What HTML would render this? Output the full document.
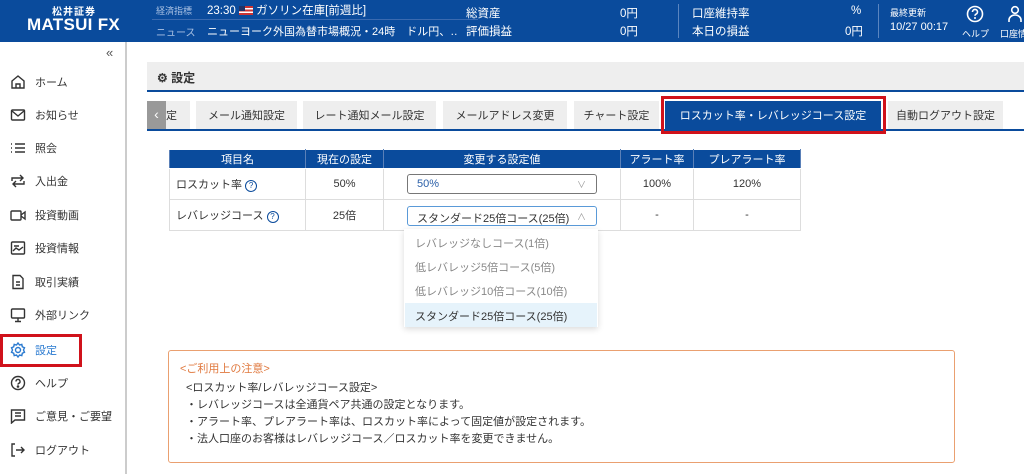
<!DOCTYPE html>
<html><head><meta charset="utf-8"><style>
*{margin:0;padding:0;box-sizing:border-box}
body{width:1024px;height:474px;overflow:hidden;font-family:"Liberation Sans","Noto Sans CJK JP",sans-serif;background:#fff;position:relative;color:#333;font-size:11px}
.a{position:absolute;white-space:nowrap}
#hd{position:absolute;left:0;top:0;width:1024px;height:42px;background:#0a4b9c;color:#fff}
#sb{position:absolute;left:0;top:42px;width:127px;height:432px;border-right:2px solid #ccc;background:#fff}
.it{position:absolute;left:10px;font-size:11px;color:#333;display:flex;align-items:center}
.it svg{width:16px;height:16px;margin-right:9px}
.tab{position:absolute;top:101px;height:28px;background:#eee;font-size:11px;color:#333;display:flex;align-items:center;justify-content:center}
table{position:absolute;left:169px;top:149px;border-collapse:collapse;font-size:11px}
td,th{border:1px solid #ddd;text-align:center}
th{background:#0a4b9c;color:#fff;font-weight:normal;height:19px;border-color:#fff #5a80b8}
td{height:31px}
.sel{position:absolute;left:407px;width:190px;height:20px;border:1px solid #777;border-radius:3px;font-size:11px;padding:3px 9px;color:#333}
.dd div{position:absolute;left:405px;width:192px;height:24px;font-size:11px;color:#888;padding:5px 10px}
</style></head><body>
<div id="hd">
<div class="a" style="left:52px;top:3px;font-size:10px;font-weight:bold;letter-spacing:1px">松井証券</div>
<div class="a" style="left:27px;top:15px;font-size:17px;font-weight:bold;letter-spacing:0.3px">MATSUI FX</div>
<div class="a" style="left:156px;top:4px;font-size:9px;color:#a9c1e3">経済指標</div>
<div class="a" style="left:207px;top:2px;font-size:11.5px">23:30 <span style="display:inline-block;width:14px;height:9px;background:linear-gradient(#c33 0 20%,#fff 20% 40%,#c33 40% 60%,#fff 60% 80%,#c33 80%);position:relative;vertical-align:-1px"><span style="position:absolute;left:0;top:0;width:6px;height:5px;background:#236"></span></span> ガソリン在庫[前週比]</div>
<div class="a" style="left:152px;top:19px;width:326px;height:1px;background:#3a6ab0"></div>
<div class="a" style="left:156px;top:24px;font-size:10px;color:#a9c1e3">ニュース</div>
<div class="a" style="left:207px;top:23px;font-size:11px;width:250px;overflow:hidden">ニューヨーク外国為替市場概況・24時　ドル円、…</div>
<div class="a" style="left:466px;top:5px;font-size:11.5px">総資産</div>
<div class="a" style="left:466px;top:23px;font-size:11.5px">評価損益</div>
<div class="a" style="left:620px;top:5px;font-size:11.5px">0円</div>
<div class="a" style="left:620px;top:23px;font-size:11.5px">0円</div>
<div class="a" style="left:678px;top:4px;width:1px;height:34px;background:#5a85c0"></div>
<div class="a" style="left:692px;top:5px;font-size:11.5px">口座維持率</div>
<div class="a" style="left:692px;top:23px;font-size:11.5px">本日の損益</div>
<div class="a" style="left:851px;top:5px;font-size:11.5px">%</div>
<div class="a" style="left:845px;top:23px;font-size:11.5px">0円</div>
<div class="a" style="left:878px;top:4px;width:1px;height:34px;background:#5a85c0"></div>
<div class="a" style="left:890px;top:6px;font-size:9px">最終更新</div>
<div class="a" style="left:890px;top:21px;font-size:11px">10/27 00:17</div>
<svg class="a" style="left:966px;top:5px" width="18" height="18" viewBox="0 0 18 18"><circle cx="9" cy="9" r="7.5" fill="none" stroke="#fff" stroke-width="1.6"/><path d="M6.5 7a2.5 2.5 0 1 1 3.5 2.2c-.8.4-1 .8-1 1.6" fill="none" stroke="#fff" stroke-width="1.6"/><circle cx="9" cy="13" r="1" fill="#fff"/></svg>
<div class="a" style="left:962px;top:27px;font-size:9px">ヘルプ</div>
<svg class="a" style="left:1006px;top:5px" width="18" height="18" viewBox="0 0 18 18"><circle cx="9" cy="5" r="3.3" fill="none" stroke="#fff" stroke-width="1.6"/><path d="M3 17v-2a6 5 0 0 1 12 0v2" fill="none" stroke="#fff" stroke-width="1.6"/></svg>
<div class="a" style="left:1000px;top:27px;font-size:9px">口座情報</div>
</div>

<div id="sb">
<div class="a" style="left:106px;top:3px;font-size:13px;color:#555">«</div>
</div>
<div class="it" style="top:74px"><svg viewBox="0 0 16 16" fill="none" stroke="#333" stroke-width="1.4"><path d="M2 7l6-5 6 5v7H2z"/><path d="M6 14v-4h4v4"/></svg>ホーム</div>
<div class="it" style="top:107px"><svg viewBox="0 0 16 16" fill="none" stroke="#333" stroke-width="1.4"><rect x="1.5" y="3" width="13" height="10" rx="1"/><path d="M2 4l6 5 6-5"/></svg>お知らせ</div>
<div class="it" style="top:140px"><svg viewBox="0 0 16 16" fill="none" stroke="#333" stroke-width="1.4"><path d="M1 4h1M1 8h1M1 12h1M5 4h10M5 8h10M5 12h10"/></svg>照会</div>
<div class="it" style="top:173px"><svg viewBox="0 0 16 16" fill="none" stroke="#333" stroke-width="1.4"><path d="M2 8V5h11M10 2l3 3-3 3M14 8v3H3M6 14l-3-3 3-3"/></svg>入出金</div>
<div class="it" style="top:207px"><svg viewBox="0 0 16 16" fill="none" stroke="#333" stroke-width="1.4"><rect x="1" y="4" width="10" height="9" rx="1"/><path d="M11 8l4-3v7l-4-3"/></svg>投資動画</div>
<div class="it" style="top:240px"><svg viewBox="0 0 16 16" fill="none" stroke="#333" stroke-width="1.4"><rect x="1.5" y="2" width="13" height="12" rx="1"/><path d="M4 6h5M3 11l3-3 3 2 4-3"/></svg>投資情報</div>
<div class="it" style="top:274px"><svg viewBox="0 0 16 16" fill="none" stroke="#333" stroke-width="1.4"><path d="M3 1.5h7l3 3v10H3z"/><path d="M6 8h4M6 11h4"/></svg>取引実績</div>
<div class="it" style="top:307px"><svg viewBox="0 0 16 16" fill="none" stroke="#333" stroke-width="1.4"><rect x="1.5" y="2" width="13" height="9" rx="1"/><path d="M8 11v3M5 14.5h6"/></svg>外部リンク</div>
<div class="a" style="left:0;top:334px;width:82px;height:33px;border:3px solid #d0121b"></div>
<div class="it" style="top:342px;color:#2a7ad0"><svg viewBox="0 0 16 16" fill="none" stroke="#2a7ad0" stroke-width="1.4"><circle cx="8" cy="8" r="2.5"/><path d="M8 1l1.5 2 2.3-.6.5 2.3 2.2 1-1 2.3 1 2.3-2.2 1-.5 2.3-2.3-.6L8 15l-1.5-2-2.3.6-.5-2.3-2.2-1 1-2.3-1-2.3 2.2-1 .5-2.3 2.3.6z"/></svg>設定</div>
<div class="it" style="top:375px"><svg viewBox="0 0 16 16" fill="none" stroke="#333" stroke-width="1.4"><circle cx="8" cy="8" r="6.5"/><path d="M6 6.5a2 2 0 1 1 2.8 1.8c-.6.3-.8.6-.8 1.3"/><circle cx="8" cy="11.5" r=".6" fill="#333"/></svg>ヘルプ</div>
<div class="it" style="top:408px"><svg viewBox="0 0 16 16" fill="none" stroke="#333" stroke-width="1.4"><path d="M1.5 2h13v10H5l-3.5 3z"/><path d="M5 5h6M5 8h6"/></svg>ご意見・ご要望</div>
<div class="it" style="top:442px"><svg viewBox="0 0 16 16" fill="none" stroke="#333" stroke-width="1.4"><path d="M5 2H2v12h3M6 8h8M11 5l3 3-3 3"/></svg>ログアウト</div>

<div class="a" style="left:147px;top:62px;width:877px;height:30px;background:#eee;border-bottom:2px solid #0a4b9c"></div>
<div class="a" style="left:157px;top:69px;font-size:12px;font-weight:bold;color:#333">⚙ 設定</div>

<div class="a" style="left:147px;top:129px;width:877px;height:2px;background:#0a4b9c"></div>
<div class="tab" style="left:166px;width:24px;justify-content:flex-start">定</div>
<div class="a" style="left:147px;top:101px;width:19px;height:28px;background:#999;color:#fff;font-size:14px;text-align:center;line-height:26px">‹</div>
<div class="tab" style="left:196px;width:101px">メール通知設定</div>
<div class="tab" style="left:303px;width:133px">レート通知メール設定</div>
<div class="tab" style="left:443px;width:124px">メールアドレス変更</div>
<div class="tab" style="left:574px;width:85px">チャート設定</div>
<div class="tab" style="left:665px;width:216px;background:#0a4b9c;color:#fff">ロスカット率・レバレッジコース設定</div>
<div class="a" style="left:661px;top:96px;width:225px;height:38px;border:3px solid #d0121b"></div>
<div class="tab" style="left:888px;width:115px">自動ログアウト設定</div>

<table>
<tr><th style="width:136px">項目名</th><th style="width:78px">現在の設定</th><th style="width:237px">変更する設定値</th><th style="width:73px">アラート率</th><th style="width:107px">プレアラート率</th></tr>
<tr><td style="text-align:left;padding-left:6px">ロスカット率 <span style="color:#0a4b9c;border:1px solid #0a4b9c;border-radius:50%;display:inline-block;width:12px;height:12px;font-size:8px;line-height:10px;text-align:center">?</span></td><td>50%</td><td></td><td>100%</td><td>120%</td></tr>
<tr><td style="text-align:left;padding-left:6px">レバレッジコース <span style="color:#0a4b9c;border:1px solid #0a4b9c;border-radius:50%;display:inline-block;width:12px;height:12px;font-size:8px;line-height:10px;text-align:center">?</span></td><td>25倍</td><td></td><td>-</td><td>-</td></tr>
</table>
<div class="sel" style="top:174px;color:#2a5fa8">50%<span style="position:absolute;right:10px;top:3px;color:#999;font-size:9px">∨</span></div>
<div class="sel" style="top:206px;border-color:#5a9ad8">スタンダード25倍コース(25倍)<span style="position:absolute;right:10px;top:3px;color:#999;font-size:9px">∧</span></div>
<div class="a" style="left:404px;top:229px;width:194px;height:98px;background:#fff;box-shadow:0 2px 6px rgba(0,0,0,.15)"></div>
<div class="dd">
<div style="top:230px">レバレッジなしコース(1倍)</div>
<div style="top:254px">低レバレッジ5倍コース(5倍)</div>
<div style="top:278px">低レバレッジ10倍コース(10倍)</div>
<div style="top:303px;background:#e6f3fb;color:#333">スタンダード25倍コース(25倍)</div>
</div>

<div class="a" style="left:168px;top:350px;width:787px;height:113px;border:1px solid #eaa070;border-radius:3px;background:#fff"></div>
<div class="a" style="left:180px;top:360px;font-size:11px;color:#e07a40">&lt;ご利用上の注意&gt;</div>
<div class="a" style="left:186px;top:380px;font-size:11px;line-height:17px;color:#333">&lt;ロスカット率/レバレッジコース設定&gt;<br>・レバレッジコースは全通貨ペア共通の設定となります。<br>・アラート率、プレアラート率は、ロスカット率によって固定値が設定されます。<br>・法人口座のお客様はレバレッジコース／ロスカット率を変更できません。</div>
</body></html>
